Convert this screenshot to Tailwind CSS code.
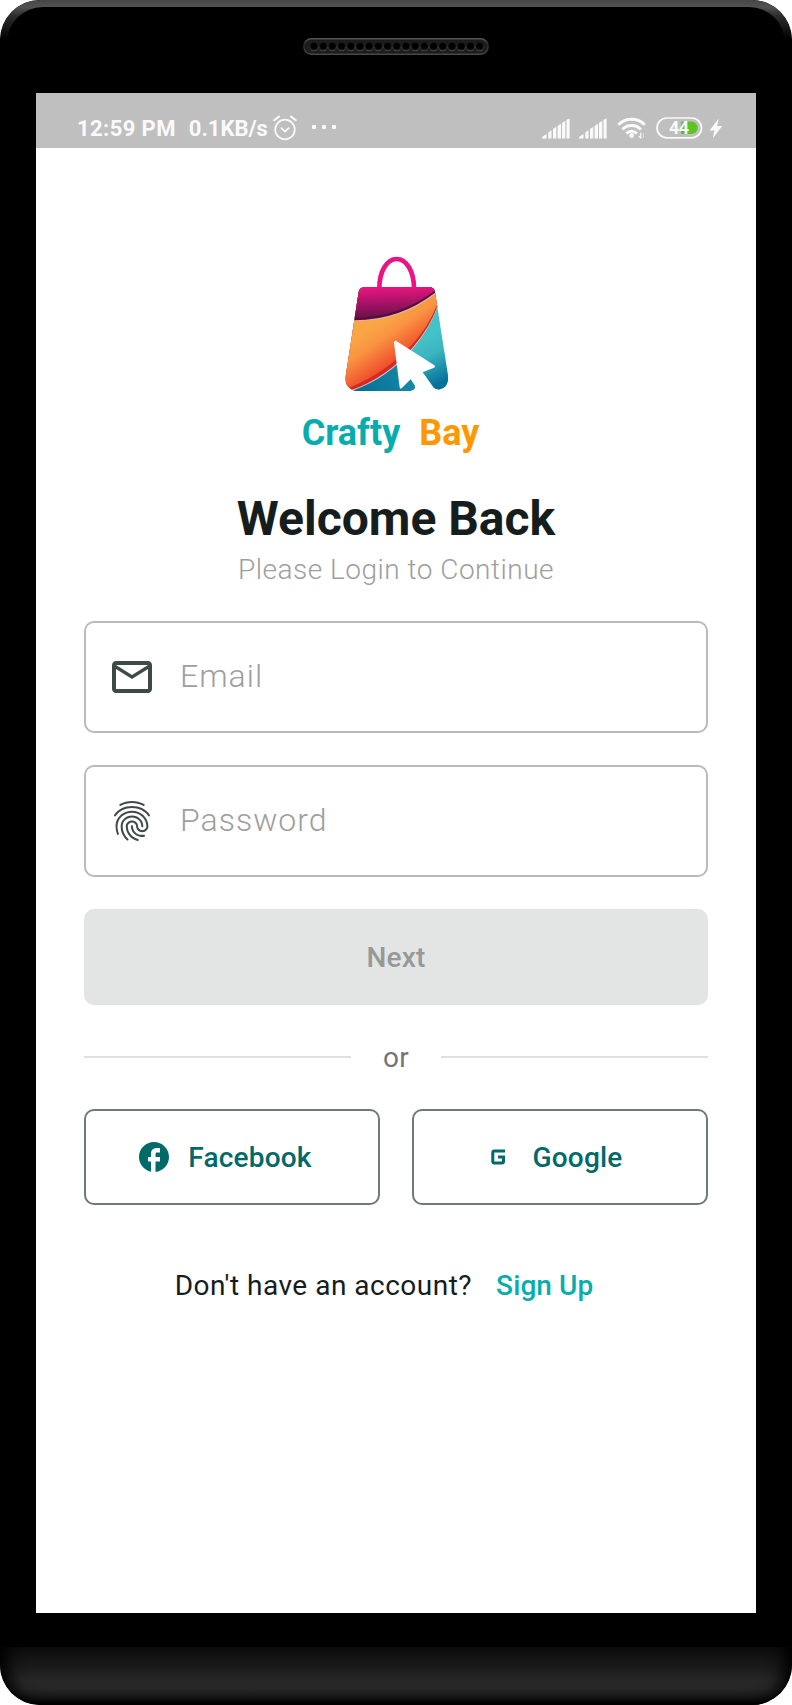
<!DOCTYPE html>
<html lang="en">
<head>
<meta charset="utf-8">
<title>Crafty Bay</title>
<script src="https://cdn.jsdelivr.net/npm/@tailwindcss/browser@4"></script>
</head>
<body class="bg-white font-['Roboto',sans-serif]">
<div class="relative w-[792px] h-[1705px] rounded-[40px] overflow-hidden bg-black flex flex-col items-center">
  <!-- glossy top rim -->
  <div class="absolute inset-x-0 top-0 h-[60px] rounded-t-[40px] bg-[linear-gradient(to_bottom,#474747_0px,#525252_7px,#2c2c2c_16px,#000_40px)]"></div>
  <div class="absolute inset-x-[7px] top-[7px] h-[80px] rounded-t-[36px] bg-black"></div>

  <!-- speaker -->
  <header class="relative h-[93px] w-full shrink-0 flex justify-center pt-[38px]">
    <svg width="186" height="17" viewBox="0 0 186 17">
      <defs>
        <linearGradient id="spk" x1="0" y1="0" x2="0" y2="1"><stop offset="0" stop-color="#555"/><stop offset=".4" stop-color="#2a2a2a"/><stop offset="1" stop-color="#484848"/></linearGradient>
        <pattern id="holes" x="6.4" y="4" width="9.2" height="9.6" patternUnits="userSpaceOnUse"><circle cx="4.6" cy="5.2" r="4" fill="#666"/><circle cx="4.6" cy="4.5" r="3.7" fill="#000"/></pattern>
      </defs>
      <rect x=".8" y=".8" width="184.4" height="15.4" rx="7.7" fill="#1c1c1c" stroke="url(#spk)" stroke-width="1.5"/>
      <rect x="6.4" y="4" width="174.8" height="9.6" fill="url(#holes)"/>
    </svg>
  </header>

  <main class="relative w-[720px] h-[1520px] shrink-0 bg-white flex flex-col">
    <!-- status bar -->
    <div class="h-[55px] bg-[#bfbfbf] pt-6 pl-[41px] pr-[33px] flex items-start justify-between text-[#fafafa]">
      <div class="flex items-center h-6 text-[22px] leading-6 font-bold">
        <span class="tracking-[0.4px] whitespace-nowrap">12:59 PM</span>
        <span class="ml-[13px]">0.1KB/s</span>
        <svg class="ml-[5px] -mt-[2px]" width="24" height="26" viewBox="0 0 24 26" fill="none" stroke="currentColor" stroke-width="1.7" stroke-linecap="round"><circle cx="12" cy="14.5" r="9.8"/><path d="M1.2 5.2 6 1.6M22.8 5.2 18 1.6" stroke-width="2"/><path d="M8.3 13.2 12 16.6l3.7-3.4"/></svg>
        <svg class="ml-[14px] -mt-[4px]" width="26" height="6" viewBox="0 0 26 6" fill="currentColor"><rect x="1" y="1" width="4" height="4" rx="1"/><rect x="11" y="1" width="4" height="4" rx="1"/><rect x="21" y="1" width="4" height="4" rx="1"/></svg>
      </div>
      <div class="flex items-center h-[22px]">
        <svg width="28" height="21" viewBox="0 0 28 21" fill="currentColor"><path d="M0 20.500v-1.500l4.500-3v4.500zM6.300 20.500v-6l3.200-2.200v8.200zM11 20.500V11l3.300-2.200v11.700zM15.600 20.500V8l3.400-2.300v14.800zM20 20.500V5l3.300-2.200v17.700zM24.500 20.500V1.800L27.600.6v19.900z"/></svg>
        <svg class="ml-[9px]" width="28" height="21" viewBox="0 0 28 21" fill="currentColor"><path d="M0 20.500v-1.500l4.500-3v4.500zM6.300 20.500v-6l3.200-2.200v8.200zM11 20.500V11l3.300-2.200v11.700zM15.600 20.500V8l3.400-2.300v14.800zM20 20.500V5l3.300-2.200v17.700zM24.500 20.500V1.800L27.600.6v19.900z"/></svg>
        <svg class="ml-[10px]" width="30" height="22" viewBox="0 0 30 22" fill="none" stroke="currentColor" stroke-width="2.800"><path d="M1.400 7.800a18.500 18.500 0 0 1 26.400 0"/><path d="M5.300 12.400a13 13 0 0 1 18.600 0"/><path d="M9.300 16.400a7.600 7.600 0 0 1 10.600 0"/><circle cx="14.600" cy="18.700" r="2.400" fill="currentColor" stroke="none"/><path d="M23.800 15.500v6m-2-2.500 2 2.500" stroke-width="1.200"/><path d="M26.500 21v-5" stroke-width="1" stroke-opacity=".5"/></svg>
        <svg class="ml-[9px]" width="47" height="22" viewBox="0 0 47 22"><rect x="1" y="1" width="44.500" height="19.800" rx="9.900" fill="none" stroke="currentColor" stroke-width="1.700"/><path d="M25 4.600h10.500a6.200 6.200 0 0 1 0 12.400H25z" fill="#5ec422"/><text x="13" y="17" font-size="18" font-weight="700" fill="currentColor" textLength="20" font-family="Roboto">44</text></svg>
        <svg class="ml-[6px]" width="14" height="21" viewBox="0 0 14 21" fill="currentColor"><path d="M9.800.5.500 12.500h5L3.800 20.200 13.200 8H8z"/></svg>
      </div>
    </div>

    <div class="px-12 flex flex-col items-center">
      <!-- shopping bag logo -->
      <svg class="mt-[105px] shrink-0" width="112" height="142" viewBox="150 39 336 426">
        <defs>
          <linearGradient id="mag" x1=".45" y1="0" x2=".55" y2="1"><stop offset=".1" stop-color="#e3157f"/><stop offset=".9" stop-color="#75104f"/></linearGradient>
          <linearGradient id="ora" gradientUnits="userSpaceOnUse" x1="240" y1="265" x2="315" y2="375"><stop offset="0" stop-color="#faa546"/><stop offset=".35" stop-color="#f99441"/><stop offset="1" stop-color="#ee4529"/></linearGradient>
          <linearGradient id="tea" gradientUnits="userSpaceOnUse" x1="395" y1="300" x2="455" y2="430"><stop offset="0" stop-color="#45c1c8"/><stop offset=".35" stop-color="#3bb5c0"/><stop offset="1" stop-color="#03709a"/></linearGradient>
          <linearGradient id="low" gradientUnits="userSpaceOnUse" x1="210" y1="450" x2="360" y2="400"><stop offset="0" stop-color="#056f96"/><stop offset="1" stop-color="#1689a8"/></linearGradient>
          <clipPath id="bag"><path d="M224 141H418Q433 142 435 156L475 412Q475 445 447 449Q430 448 425 437L375 437Q376 451 362 453H195Q166 445 166 415L206 156Q208 143 224 141Z"/></clipPath>
        </defs>
        <path d="M268 146C268 92 292 57 320 57C348 57 372 92 372 146" fill="none" stroke="#ec1483" stroke-width="14"/>
        <g clip-path="url(#bag)">
          <rect x="150" y="135" width="336" height="330" fill="url(#tea)"/>
          <path d="M150 465L187 452Q280 415 330 360V350H345L390 420V465Z" fill="url(#low)"/>
          <path d="M150 135H486L441 205Q420 265 372 322Q295 415 187 452L150 460Z" fill="#d8c9cb"/>
          <path d="M150 135H486L441 202Q420 262 370 320Q293 411 185 450L150 456Z" fill="#d12924"/>
          <path d="M150 135H486L441 195Q415 262 365 315Q285 400 176 444L150 450Z" fill="url(#ora)"/>
          <path d="M150 135H486V120L436 162Q330 244 194 243H150Z" fill="#ddb7b5"/>
          <path d="M150 135H486L434 159Q330 240 194 241H150Z" fill="#560d3d"/>
          <path d="M150 135H486L434 152Q330 232 190 233H150Z" fill="url(#mag)"/>
        </g>
        <path d="M319 303L433 376Q438 380 432 383L398 397L427 437Q432 447 445 449V465H362V453Q380 449 374 436L362 418L335 445Q330 448 329 442L312 308Q312 301 319 303Z" fill="#fff"/>
      </svg>

      <div class="mt-4 pr-[11px] flex gap-[19px] text-4xl leading-[44px] font-bold"><span class="text-[#07adae]">Crafty</span><span class="text-[#ff9800]">Bay</span></div>
      <h1 class="mt-9 text-5xl leading-[56px] font-bold text-[#161d1d]">Welcome Back</h1>
      <p class="mt-[5px] text-[28px] leading-9 font-light tracking-[0.5px] text-[#9e9e9e]">Please Login to Continue</p>

      <div class="mt-[33px] w-full h-28 border-2 border-[#bababa] rounded-[10px] flex items-center pl-[22px] text-[32px] font-light tracking-[1px] text-[#9e9e9e]">
        <svg class="mr-6" width="48" height="48" viewBox="0 0 24 24" fill="#3f4948"><path d="M20 4H4c-1.100 0-1.990.9-1.990 2L2 18c0 1.100.9 2 2 2h16c1.100 0 2-.9 2-2V6c0-1.100-.9-2-2-2zm0 14H4V8l8 5 8-5v10zm-8-7L4 6h16l-8 5z"/></svg>
        <span class="pb-[2px]">Email</span>
      </div>
      <div class="mt-8 w-full h-28 border-2 border-[#bababa] rounded-[10px] flex items-center pl-[22px] text-[32px] font-light tracking-[1px] text-[#9e9e9e]">
        <svg class="mr-6" width="48" height="48" viewBox="0 0 24 24" fill="#3f4948"><path d="M17.81 4.47c-.08 0-.16-.02-.23-.06C15.66 3.42 14 3 12.01 3c-1.98 0-3.86.47-5.57 1.41-.24.13-.54.04-.68-.2-.13-.24-.04-.55.2-.68C7.82 2.52 9.86 2 12.01 2c2.13 0 3.99.47 6.03 1.52.25.13.34.43.21.67-.09.18-.26.28-.44.28zM3.5 9.72c-.1 0-.2-.03-.29-.09-.23-.16-.28-.47-.12-.7.99-1.4 2.25-2.5 3.75-3.27C9.98 4.04 14 4.03 17.15 5.65c1.5.77 2.76 1.86 3.75 3.25.16.22.11.54-.12.7-.23.16-.54.11-.7-.12-.9-1.26-2.04-2.25-3.39-2.94-2.87-1.47-6.54-1.47-9.4.01-1.36.7-2.5 1.7-3.4 2.96-.08.14-.23.21-.39.21zm6.25 12.07c-.13 0-.26-.05-.35-.15-.87-.87-1.34-1.43-2.01-2.64-.69-1.23-1.05-2.73-1.05-4.34 0-2.97 2.54-5.39 5.66-5.39s5.66 2.42 5.66 5.39c0 .28-.22.5-.5.5s-.5-.22-.5-.5c0-2.42-2.09-4.39-4.66-4.39-2.57 0-4.66 1.97-4.66 4.39 0 1.44.32 2.77.93 3.85.64 1.15 1.08 1.64 1.85 2.42.19.2.19.51 0 .71-.11.1-.24.15-.37.15zm7.17-1.85c-1.19 0-2.24-.3-3.1-.89-1.49-1.01-2.38-2.65-2.38-4.39 0-.28.22-.5.5-.5s.5.22.5.5c0 1.41.72 2.74 1.94 3.56.71.48 1.54.71 2.54.71.24 0 .64-.03 1.04-.1.27-.05.53.13.58.41.05.27-.13.53-.41.58-.57.11-1.07.12-1.21.12zM14.91 22c-.04 0-.09-.01-.13-.02-1.59-.44-2.63-1.03-3.72-2.1-1.4-1.39-2.17-3.24-2.17-5.22 0-1.62 1.38-2.94 3.08-2.94 1.7 0 3.08 1.32 3.08 2.94 0 1.07.93 1.94 2.08 1.94s2.08-.87 2.08-1.94c0-3.77-3.25-6.83-7.25-6.83-2.84 0-5.44 1.58-6.61 4.03-.39.81-.59 1.76-.59 2.8 0 .78.07 2.01.67 3.61.1.26-.03.55-.29.64-.26.1-.55-.04-.64-.29-.49-1.31-.73-2.61-.73-3.96 0-1.2.23-2.29.68-3.24 1.33-2.79 4.28-4.6 7.51-4.6 4.55 0 8.25 3.51 8.25 7.83 0 1.62-1.38 2.94-3.08 2.94s-3.08-1.32-3.08-2.94c0-1.07-.93-1.94-2.08-1.94s-2.08.87-2.08 1.94c0 1.71.66 3.31 1.87 4.51.95.94 1.86 1.46 3.27 1.85.27.07.42.35.35.61-.05.23-.26.38-.47.38z"/></svg>
        <span class="pb-[2px]">Password</span>
      </div>

      <button class="mt-8 w-full h-24 pt-[2px] rounded-[10px] bg-[#e2e5e4] text-[28px] font-medium tracking-[0.2px] text-[#969998]">Next</button>

      <div class="mt-[35px] w-full h-9 flex items-center gap-8 text-[28px] leading-9 tracking-[0.4px] text-[#757575]">
        <div class="flex-1 h-[2px] mb-[2px] bg-[#e0e0e0]"></div><span>or</span><div class="flex-1 h-[2px] mb-[2px] bg-[#e0e0e0]"></div>
      </div>

      <div class="mt-[33px] w-full grid grid-cols-2 gap-8 text-[28px] font-medium tracking-[0.2px] text-[#006a69]">
        <button class="h-24 border-2 border-[#6f7978] rounded-[10px] pr-4 flex items-center justify-center gap-4">
          <svg width="36" height="36" viewBox="0 0 24 24" fill="currentColor"><path d="M22 12c0-5.520-4.480-10-10-10S2 6.480 2 12c0 4.840 3.440 8.870 8 9.800V15H8v-3h2V9.500C10 7.570 11.570 6 13.500 6H16v3h-2c-.55 0-1 .45-1 1v2h3v3h-3v6.950c5.050-.5 9-4.760 9-9.950z"/></svg>
          <span class="pt-[2px]">Facebook</span>
        </button>
        <button class="h-24 border-2 border-[#6f7978] rounded-[10px] pr-[17px] flex items-center justify-center gap-4">
          <svg width="36" height="36" viewBox="0 0 36 36" fill="none" stroke="currentColor" stroke-width="3"><path d="M25 12H14.300Q12.800 12 12.800 13.500V22.500Q12.800 24 14.300 24H22Q23.500 24 23.500 22.500V18H18"/></svg>
          <span class="pt-[2px]">Google</span>
        </button>
      </div>

      <div class="mt-[65px] flex gap-6 text-[28px] leading-8 whitespace-nowrap pr-6"><span class="tracking-[0.5px] text-[#161d1d]">Don't have an account?</span><a class="font-medium tracking-[0.1px] text-[#07adae]">Sign Up</a></div>
    </div>
  </main>

  <!-- lower bezel -->
  <footer class="mt-[34px] w-full h-[58px] shrink-0 rounded-b-[40px] bg-[linear-gradient(to_bottom,#0d0d0d_0px,#1a1a1a_20px,#272727_34px,#262626_42px,#171717_50px,#000_57px)] shadow-[inset_18px_0_16px_-10px_#000,inset_-18px_0_16px_-10px_#000]"></footer>
</div>
</body>
</html>
